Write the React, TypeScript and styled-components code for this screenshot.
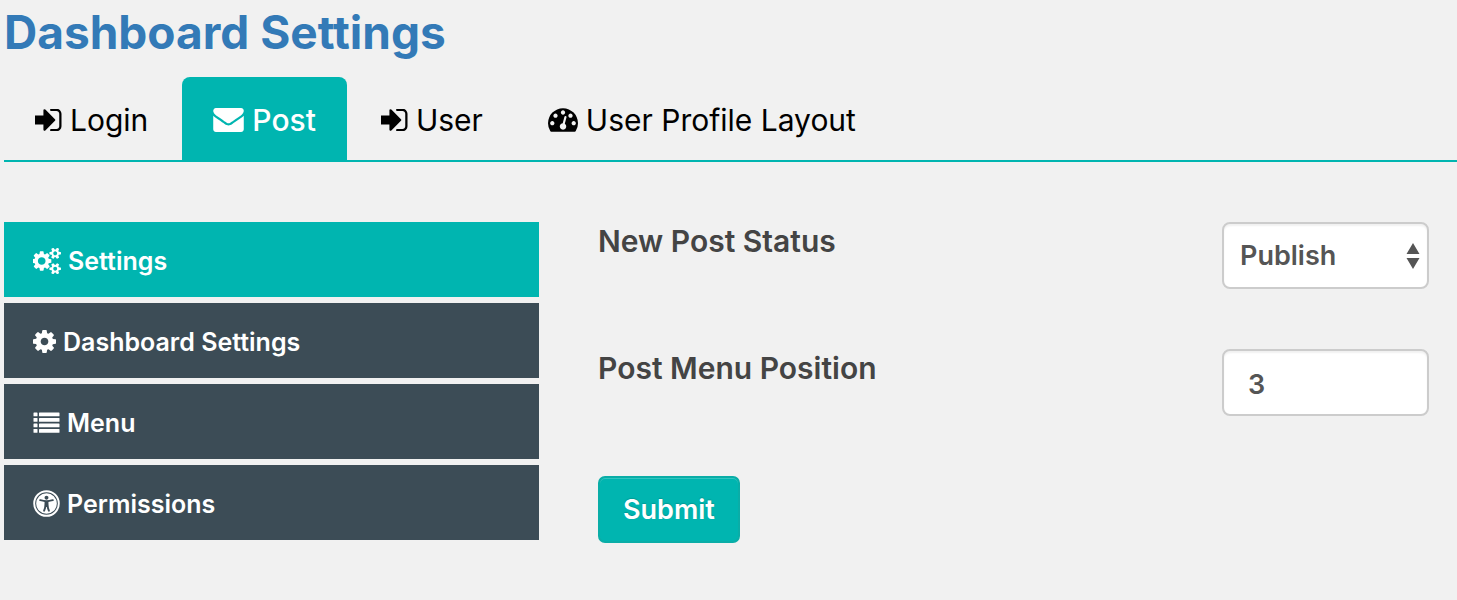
import React from 'react';
import styled, { createGlobalStyle } from 'styled-components';

const teal = '#00b5b0';
const slate = '#3c4c56';

const GlobalStyle = createGlobalStyle`
  * { box-sizing: border-box; }
  body {
    margin: 0;
    background: #f1f1f1;
    font-family: Inter, "Open Sans", sans-serif;
    color: #444;
  }
`;

const Page = styled.main`
  padding: 4px 0 0 4px;
`;

const Title = styled.h1`
  margin: 0;
  font-size: 46px;
  line-height: 56px;
  font-weight: 700;
  color: #337ab7;
`;

const Tabs = styled.nav`
  display: flex;
  gap: 3px;
  margin-top: 17px;
  border-bottom: 2px solid ${teal};
`;

const Tab = styled.a<{ $active?: boolean }>`
  display: flex;
  align-items: center;
  gap: 8px;
  height: 83px;
  padding: 2px 31px 0;
  border-radius: 8px 8px 0 0;
  font-size: 30px;
  font-weight: ${p => (p.$active ? 500 : 400)};
  color: ${p => (p.$active ? '#fff' : '#000')};
  background: ${p => (p.$active ? teal : 'transparent')};
  text-decoration: none;
  white-space: nowrap;
`;

const Content = styled.div`
  display: grid;
  grid-template-columns: minmax(0, 535fr) minmax(0, 859fr);
  column-gap: 59px;
  padding-top: 60px;
`;

const SideMenu = styled.nav`
  display: flex;
  flex-direction: column;
  gap: 6px;
`;

const SideItem = styled.a<{ $active?: boolean }>`
  display: flex;
  align-items: center;
  gap: 7px;
  height: 75px;
  padding: 2px 29px 0;
  font-size: 25px;
  font-weight: 600;
  color: #fff;
  background: ${p => (p.$active ? teal : slate)};
  text-decoration: none;
`;

const Form = styled.form`
  padding-right: 28px;
`;

const Field = styled.div`
  display: flex;
  justify-content: space-between;
  align-items: flex-start;
  margin-bottom: 60px;
`;

const Label = styled.label`
  font-size: 30px;
  line-height: 38px;
  font-weight: 600;
  color: #444;
`;

const controlHeight = '67px';
const controlWidth = '207px';

const SelectBox = styled.div`
  position: relative;
  width: ${controlWidth};
`;

const Select = styled.select`
  appearance: none;
  display: block;
  width: 100%;
  height: ${controlHeight};
  padding: 0 16px;
  border: 2px solid #ccc;
  border-radius: 8px;
  background: #fff;
  box-shadow: inset 0 2px 2px rgba(0, 0, 0, 0.06);
  font: 600 27px Inter, sans-serif;
  color: #555;
`;

const Arrows = styled.svg`
  position: absolute;
  right: 9px;
  top: 21px;
  pointer-events: none;
`;

const Input = styled.input`
  width: ${controlWidth};
  height: ${controlHeight};
  padding: 4px 24px 0;
  border: 2px solid #ccc;
  border-radius: 8px;
  background: #fff;
  box-shadow: inset 0 2px 2px rgba(0, 0, 0, 0.06);
  font: 600 27px Inter, sans-serif;
  color: #555;
`;

const Submit = styled.button`
  height: ${controlHeight};
  padding: 0 23px;
  border: 2px solid #0aada7;
  border-radius: 7px;
  background: ${teal};
  box-shadow: inset 0 1px 0 #33c4bf;
  text-shadow: 0 -1px 1px #009a95;
  font: 600 27px Inter, sans-serif;
  color: #fff;
`;

const Icon = styled.svg`
  flex: none;
  fill: currentColor;
`;

const SignIn = () => (
  <Icon width="27" height="22" viewBox="164 274 1528 1245" aria-hidden="true">
    <path d="M1312 896q0 26-19 45l-544 544q-19 19-45 19t-45-19-19-45v-288h-448q-26 0-45-19t-19-45v-384q0-26 19-45t45-19h448v-288q0-26 19-45t45-19 45 19l544 544q19 19 19 45zm352-352v704q0 119-84.5 203.5t-203.5 84.5h-320q-13 0-22.5-9.5t-9.5-22.5q0-4-1-20t-.5-26.5 3-23.5 10-19.5 20.5-6.500h320q66 0 113-47t47-113v-704q0-66-47-113t-113-47h-312l-11.5-1-11.500-3-8-5.500-7-9-2-13.500q0-4-1-20t-.5-26.500 3-23.500 10-19.500 20.500-6.500h320q119 0 203.500 84.500t84.500 203.500z" />
  </Icon>
);

const Envelope = () => (
  <Icon width="31" height="24" viewBox="0 256 1792 1408" aria-hidden="true">
    <path d="M1792 710v794q0 66-47 113t-113 47h-1472q-66 0-113-47t-47-113v-794q44 49 101 87 362 246 497 345 57 42 92.5 65.5t94.5 48 110 24.5h2q51 0 110-24.5t94.5-48 92.5-65.5q170-123 498-345 57-39 100-87zm0-294q0 79-49 151t-122 123q-376 261-468 325-10 7-42.5 31t-54 38.5-52 32.5-57.5 27-50 9h-2q-23 0-50-9t-57.5-27-52-32.5-54-38.5-42.5-31q-91-64-262-182.5t-205-142.5q-62-42-117-115.5t-55-136.5q0-78 41.5-130t118.5-52h1472q65 0 112.5 47t47.5 113z" />
  </Icon>
);

const Gauge = () => (
  <Icon width="30" height="24" viewBox="0 256 1792 1408" aria-hidden="true">
    <path d="M384 1152q0-53-37.5-90.5t-90.5-37.5-90.5 37.5-37.5 90.5 37.5 90.5 90.5 37.5 90.5-37.5 37.5-90.5zm192-448q0-53-37.5-90.5t-90.5-37.5-90.5 37.5-37.5 90.5 37.5 90.5 90.5 37.5 90.5-37.5 37.5-90.5zm428 481l101-382q6-26-7.5-48.5t-38.5-29.5-48 6.5-30 39.5l-101 382q-60 5-107 43.5t-63 98.5q-20 77 20 146t117 89 146-20 89-117q16-60-6-117t-72-91zm660-33q0-53-37.5-90.5t-90.5-37.5-90.5 37.5-37.5 90.5 37.5 90.5 90.5 37.5 90.5-37.5 37.5-90.5zm-640-640q0-53-37.5-90.5t-90.5-37.5-90.5 37.5-37.5 90.5 37.5 90.5 90.5 37.5 90.5-37.5 37.5-90.5zm448 192q0-53-37.5-90.5t-90.5-37.5-90.5 37.5-37.5 90.5 37.5 90.5 90.5 37.5 90.5-37.5 37.5-90.5zm320 448q0 261-141 483-19 29-54 29h-1402q-35 0-54-29-141-221-141-483 0-182 71-348t191-286 286-191 348-71 348 71 286 191 191 286 71 348z" />
  </Icon>
);

const Cogs = () => (
  <Icon width="28" height="26" viewBox="0 32 1856 1728" aria-hidden="true">
    <path d="M832 896q0-106-75-181t-181-75-181 75-75 181 75 181 181 75 181-75 75-181zm768 512q0-52-38-90t-90-38-90 38-38 90q0 53 37.5 90.5t90.5 37.5 90.5-37.5 37.5-90.5zm0-1024q0-52-38-90t-90-38-90 38-38 90q0 53 37.5 90.5t90.5 37.5 90.5-37.5 37.5-90.5zm-384 421v185q0 10-7 19.5t-16 10.5l-155 24q-11 35-32 76 34 48 90 115 7 11 7 20 0 12-7 19-23 30-82.5 89.5t-78.5 59.5q-11 0-21-7l-115-90q-37 19-77 31-11 108-23 155-7 24-30 24h-186q-11 0-20-7.5t-10-17.5l-23-153q-34-10-75-31l-118 89q-7 7-20 7-11 0-21-8-144-133-144-160 0-9 7-19 10-14 41-53t47-61q-23-44-35-82l-152-24q-10-1-17-9.5t-7-19.5v-185q0-10 7-19.5t16-10.5l155-24q11-35 32-76-34-48-90-115-7-11-7-20 0-12 7-20 22-30 82-89t79-59q11 0 21 7l115 90q34-18 77-32 11-108 23-154 7-24 30-24h186q11 0 20 7.5t10 17.5l23 153q34 10 75 31l118-89q8-7 20-7 11 0 21 8 144 133 144 160 0 8-7 19-12 16-42 54t-45 60q23 48 34 82l152 23q10 2 17 10.5t7 19.5zm640 533v140q0 16-149 31-12 27-30 52 51 113 51 138 0 4-4 7-122 71-124 71-8 0-46-47t-52-68q-20 2-30 2t-30-2q-14 21-52 68t-46 47q-2 0-124-71-4-3-4-7 0-25 51-138-18-25-30-52-149-15-149-31v-140q0-16 149-31 13-29 30-52-51-113-51-138 0-4 4-7 4-2 35-20t59-34 30-16q8 0 46 46.5t52 67.5q20-2 30-2t30 2q51-71 92-112l6-2q4 0 124 70 4 3 4 7 0 25-51 138 17 23 30 52 149 15 149 31zm0-1024v140q0 16-149 31-12 27-30 52 51 113 51 138 0 4-4 7-122 71-124 71-8 0-46-47t-52-68q-20 2-30 2t-30-2q-14 21-52 68t-46 47q-2 0-124-71-4-3-4-7 0-25 51-138-18-25-30-52-149-15-149-31v-140q0-16 149-31 13-29 30-52-51-113-51-138 0-4 4-7 4-2 35-20t59-34 30-16q8 0 46 46.5t52 67.5q20-2 30-2t30 2q51-71 92-112l6-2q4 0 124 70 4 3 4 7 0 25-51 138 17 23 30 52 149 15 149 31z" />
  </Icon>
);

const Cog = () => (
  <Icon width="23" height="23" viewBox="128 128 1536 1536" aria-hidden="true">
    <path d="M1152 896q0-106-75-181t-181-75-181 75-75 181 75 181 181 75 181-75 75-181zm512-109v222q0 12-8 23t-20 13l-185 28q-19 54-39 91 35 50 107 138 10 12 10 25t-9 23q-27 37-99 108t-94 71q-12 0-26-9l-138-108q-44 23-91 38-16 136-29 186-7 28-36 28h-222q-14 0-24.5-8.5t-11.5-21.5l-28-184q-49-16-90-37l-141 107q-10 9-25 9-14 0-25-11-126-114-165-168-7-10-7-23 0-12 8-23 15-21 51-66.5t54-70.5q-27-50-41-99l-183-27q-13-2-21-12.5t-8-23.5v-222q0-12 8-23t19-13l186-28q14-46 39-92-40-57-107-138-10-12-10-24 0-10 9-23 26-36 98.5-107.5t94.5-71.5q13 0 26 10l138 107q44-23 91-38 16-136 29-186 7-28 36-28h222q14 0 24.5 8.5t11.5 21.5l28 184q49 16 90 37l142-107q9-9 24-9 13 0 25 10 129 119 165 170 7 8 7 22 0 12-8 23-15 21-51 66.5t-54 70.5q26 50 41 98l183 28q13 2 21 12.5t8 23.5z" />
  </Icon>
);

const List = () => (
  <Icon width="27" height="22" viewBox="0 0 27 22" aria-hidden="true">
    {[0.5, 6, 11.5, 17].map(y => (
      <g key={y}>
        <rect x="0.5" y={y} width="4" height="3.8" rx="0.6" />
        <rect x="6" y={y} width="20.5" height="3.8" rx="0.6" />
      </g>
    ))}
  </Icon>
);

const Access = () => (
  <Icon width="27" height="27" viewBox="0 0 1792 1792" aria-hidden="true">
    <path fillRule="evenodd" d="M896 16a880 880 0 1 0 0 1760a880 880 0 1 0 0-1760zM896 144a752 752 0 1 1 0 1504a752 752 0 1 1 0-1504zM896 210a686 686 0 1 0 0 1372a686 686 0 1 0 0-1372zM1374 657q-6-26-28.5-39.5t-48.5-7.5q-261 62-401 62t-401-62q-26-6-48.5 7.5t-28.5 39.5 7.5 48.5 39.5 28.5q194 46 303 58-2 158-15.5 269t-26.5 155.5-41 115.5l-9 21q-10 25 1 49t36 34q9 4 23 4 44 0 60-41l8-20q54-139 71-259h42q17 120 71 259l8 20q16 41 60 41 14 0 23-4 25-10 36-34t1-49l-9-21q-28-71-41-115.5t-26.5-155.5-15.5-269q109-12 303-58 26-6 39.5-28.5t7.5-48.5zM1024 512q0-53-37.5-90.5t-90.5-37.5-90.5 37.5-37.5 90.5 37.5 90.5 90.5 37.5 90.5-37.5 37.5-90.5z" />
  </Icon>
);

export default function App() {
  return (
    <>
      <GlobalStyle />
      <Page>
        <Title>Dashboard Settings</Title>
        <Tabs aria-label="Sections">
          <Tab href="#login"><SignIn />Login</Tab>
          <Tab href="#post" $active><Envelope />Post</Tab>
          <Tab href="#user"><SignIn />User</Tab>
          <Tab href="#layout"><Gauge />User Profile Layout</Tab>
        </Tabs>
        <Content>
          <SideMenu aria-label="Post">
            <SideItem href="#settings" $active><Cogs />Settings</SideItem>
            <SideItem href="#dashboard"><Cog />Dashboard Settings</SideItem>
            <SideItem href="#menu"><List />Menu</SideItem>
            <SideItem href="#permissions"><Access />Permissions</SideItem>
          </SideMenu>
          <Form>
            <Field>
              <Label htmlFor="status">New Post Status</Label>
              <SelectBox>
                <Select id="status" defaultValue="publish">
                  <option value="publish">Publish</option>
                </Select>
                <Arrows width="14" height="26" viewBox="0 0 14 26" fill="#555" aria-hidden="true">
                  <path d="M7 0l6.500 11h-13zM7 26l6.500-11h-13z" />
                </Arrows>
              </SelectBox>
            </Field>
            <Field>
              <Label htmlFor="position">Post Menu Position</Label>
              <Input id="position" type="text" defaultValue="3" />
            </Field>
            <Submit type="button">Submit</Submit>
          </Form>
        </Content>
      </Page>
    </>
  );
}
